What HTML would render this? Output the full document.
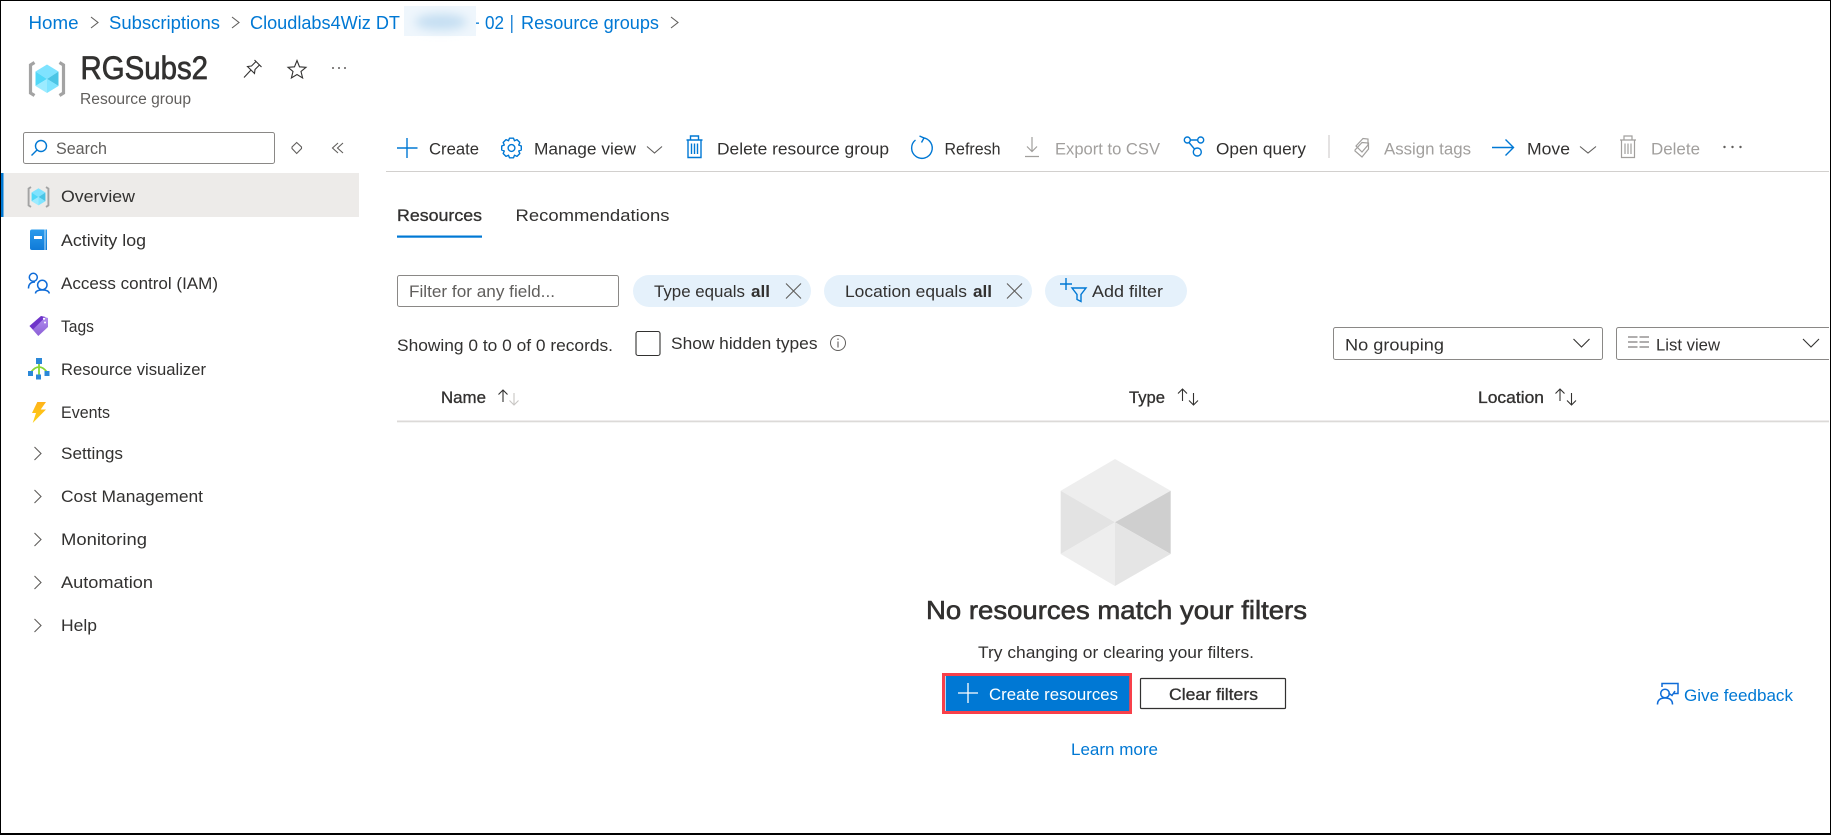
<!DOCTYPE html>
<html lang="en"><head><meta charset="utf-8"><title>RGSubs2</title>
<style>
html,body{margin:0;padding:0;background:#fff;width:1831px;height:835px;overflow:hidden}
svg{display:block}
text{font-family:"Liberation Sans",sans-serif;font-size:17px;fill:#323130}
.l{fill:#0078d4}
.g{fill:#605e5c}
.d{fill:#a19f9d}
.s{stroke:#323130;stroke-width:.32px}
.i{fill:none;stroke:#0078d4;stroke-width:1.4}
.k{fill:none;stroke:#605e5c;stroke-width:1.1}
.q{fill:none;stroke:#a19f9d;stroke-width:1.2}
.a{fill:none;stroke:#323130;stroke-width:1.1}
</style></head><body>
<svg width="1831" height="835" viewBox="0 0 1831 835" xmlns="http://www.w3.org/2000/svg">
<defs>
<filter id="b" x="-40%" y="-80%" width="180%" height="260%"><feGaussianBlur stdDeviation="5"/></filter>
<linearGradient id="bk" x1="0" y1="0" x2="0" y2="1"><stop offset="0" stop-color="#2a9bec"/><stop offset="1" stop-color="#0f7ad8"/></linearGradient>
<linearGradient id="tg" x1="0" y1="0" x2="0" y2="1"><stop offset="0" stop-color="#b28ff0"/><stop offset="1" stop-color="#8c5fd6"/></linearGradient>
<linearGradient id="bt" x1="0" y1="0" x2="0" y2="1"><stop offset="0" stop-color="#ffb21a"/><stop offset="1" stop-color="#fcd116"/></linearGradient>
<g id="rg">
<path d="M-12.500-16.500L-16.500-14V14L-12.500 16.500" fill="none" stroke="#a3a3a3" stroke-width="3.200"/>
<path d="M12.500-16.500L16.500-14V14L12.500 16.500" fill="none" stroke="#a3a3a3" stroke-width="3.200"/>
<path d="M0-14.500L11.500-7.500L0 0L-11.500-7.500Z" fill="#7fe3ff"/>
<path d="M-11.500-7.500L0 0L-11.500 7L-11.500-7.500Z" fill="#50d8f8"/>
<path d="M11.500-7.500L0 0L11.500 7Z" fill="#4bc5e5"/>
<path d="M0 0L-11.500 7L0 14Z" fill="#9cebff"/>
<path d="M0 0L11.500 7L0 14Z" fill="#7fe4ff"/>
</g>
<g id="tr">
<path d="M-8-7H8M-4-7V-11H4V-7M-6.500-7V10.500H6.500V-7M-3-3.500V7M0-3.500V7M3-3.500V7"/>
</g>
</defs>
<rect width="1831" height="835" fill="#fff"/>

<!-- breadcrumb -->
<text x="28.500" y="29" class="l" style="font-size:18px" textLength="50" lengthAdjust="spacingAndGlyphs">Home</text>
<polyline points="91,17 98,22.500 91,28" class="k"/>
<text x="109" y="29" class="l" style="font-size:18px" textLength="111" lengthAdjust="spacingAndGlyphs">Subscriptions</text>
<polyline points="232,17 239,22.500 232,28" class="k"/>
<text x="250" y="29" class="l" style="font-size:18px" textLength="150" lengthAdjust="spacingAndGlyphs">Cloudlabs4Wiz DT</text>
<rect x="404" y="6" width="72" height="30" fill="#eff6fc"/>
<ellipse cx="441" cy="22" rx="26" ry="8" fill="#c4def2" filter="url(#b)"/>
<rect x="476" y="22.500" width="3" height="1.300" fill="#0078d4"/>
<text x="485" y="29" class="l" style="font-size:18px" textLength="19" lengthAdjust="spacingAndGlyphs">02</text>
<rect x="511" y="15" width="1.500" height="18" fill="#2b8bd9"/>
<text x="521" y="29" class="l" style="font-size:18px" textLength="138" lengthAdjust="spacingAndGlyphs">Resource groups</text>
<polyline points="671,17 678,22.500 671,28" class="k"/>

<!-- title -->
<use href="#rg" transform="translate(47,79)"/>
<text x="80.500" y="79" style="font-size:32px;stroke:#323130;stroke-width:.7px" textLength="127.500" lengthAdjust="spacingAndGlyphs">RGSubs2</text>
<text x="80" y="104" class="g" style="font-size:15.500px" textLength="111" lengthAdjust="spacingAndGlyphs">Resource group</text>
<path d="M254.500 60L261.500 67M256 61.500L251.500 66L247.500 66.500L254.500 73.500L255 69.500L259.500 65M251 70L244 77.500" class="a" stroke-width="1.200"/>
<path d="M297 60.500L299.500 66.800L306 67.300L301 71.500L302.600 78L297 74.500L291.400 78L293 71.500L288 67.300L294.500 66.800Z" class="a"/>
<g fill="#605e5c"><circle cx="333" cy="68" r="1"/><circle cx="339" cy="68" r="1"/><circle cx="345" cy="68" r="1"/></g>

<!-- search -->
<rect x="23.500" y="132.500" width="251" height="31" rx="2" fill="#fff" stroke="#8a8886"/>
<circle cx="41" cy="146" r="5.500" class="i" stroke-width="1.200"/>
<line x1="37" y1="150" x2="31.500" y2="155.500" class="i" stroke-width="1.300"/>
<text x="56" y="154" class="g" textLength="51" lengthAdjust="spacingAndGlyphs">Search</text>
<polygon points="296.700,142.500 301.500,147 301.500,148.500 296.700,153.500 292,148.500 292,147" class="k"/>
<polyline points="338,143 332.500,148 338,153" class="k"/>
<polyline points="343,143 337.500,148 343,153" class="k"/>

<!-- nav -->
<rect x="1" y="173" width="358" height="44" fill="#edebe9"/>
<rect x="1" y="173" width="2.500" height="44" fill="#0078d4"/>
<use href="#rg" transform="translate(38.500,197) scale(.6)"/>
<text x="61" y="202" textLength="74" lengthAdjust="spacingAndGlyphs">Overview</text>

<path d="M32 229.500H47V250H32Q30 250 30 248V231.500Q30 229.500 32 229.500Z" fill="url(#bk)"/>
<path d="M45 229.500V250" stroke="#bfe0fa" stroke-width="1"/>
<rect x="34" y="236" width="8" height="3" fill="#fff"/>
<text x="61" y="246" textLength="85" lengthAdjust="spacingAndGlyphs">Activity log</text>

<g fill="none" stroke="#0f6cd8" stroke-width="1.500">
<circle cx="33.300" cy="277.300" r="4"/><path d="M28.500 288.500C28.500 284 31 282 35 282"/>
<circle cx="42.300" cy="285" r="4.700"/><path d="M35.500 293.500C35.500 291 38.500 290 42.300 290S49 291 49.300 293.500"/>
</g>
<text x="61" y="289" textLength="157" lengthAdjust="spacingAndGlyphs">Access control (IAM)</text>

<path d="M29.500 326L41 316L48 318V327L38.300 336Z" fill="url(#tg)"/>
<path d="M29.500 326L41 316L45.500 317L33 329.500Z" fill="#6f35c9"/>
<circle cx="44" cy="318.700" r="1.100" fill="#fff"/><circle cx="45" cy="322.500" r="1" fill="#fff"/>
<text x="61" y="332" textLength="33" lengthAdjust="spacingAndGlyphs">Tags</text>

<path d="M39 364V375M31 372Q35 367 39 367T47 372" fill="none" stroke="#86d633" stroke-width="1.800"/>
<rect x="36" y="358" width="6" height="6" fill="#2b88d8"/>
<rect x="28" y="371" width="5" height="5" fill="#2b88d8"/>
<rect x="36" y="374.500" width="5" height="5" fill="#2b88d8"/>
<rect x="44.500" y="371" width="5" height="5" fill="#2b88d8"/>
<text x="61" y="375" textLength="145" lengthAdjust="spacingAndGlyphs">Resource visualizer</text>

<path d="M37.300 402H46L40.700 409.500H46L32.700 423L36 413H32Z" fill="url(#bt)"/>
<text x="61" y="418" textLength="49" lengthAdjust="spacingAndGlyphs">Events</text>

<polyline points="34.500,447 41,453.500 34.500,460" class="k"/>
<text x="61" y="459" textLength="62" lengthAdjust="spacingAndGlyphs">Settings</text>
<polyline points="34.500,490 41,496.500 34.500,503" class="k"/>
<text x="61" y="502" textLength="142" lengthAdjust="spacingAndGlyphs">Cost Management</text>
<polyline points="34.500,533 41,539.500 34.500,546" class="k"/>
<text x="61" y="545" textLength="86" lengthAdjust="spacingAndGlyphs">Monitoring</text>
<polyline points="34.500,576 41,582.500 34.500,589" class="k"/>
<text x="61" y="588" textLength="92" lengthAdjust="spacingAndGlyphs">Automation</text>
<polyline points="34.500,619 41,625.500 34.500,632" class="k"/>
<text x="61" y="631" textLength="36" lengthAdjust="spacingAndGlyphs">Help</text>

<!-- toolbar -->
<path d="M397 148H417.500M407 138V158" class="i"/>
<text x="429" y="154.500" textLength="50" lengthAdjust="spacingAndGlyphs">Create</text>
<g transform="translate(511.500,148)"><path d="M7.200 3L9.800 2V-2L7.200-3L8.340-5.510L5.510-8.340L3-7.200L2-9.800H-2L-3-7.200L-5.510-8.340L-8.340-5.510L-7.200-3L-9.800-2V2L-7.200 3L-8.340 5.510L-5.510 8.340L-3 7.200L-2 9.800H2L3 7.200L5.510 8.340L8.340 5.510Z" class="i" stroke-width="1.200" stroke-linejoin="round"/><circle r="3.400" class="i" stroke-width="1.200"/></g>
<text x="534" y="154.500" textLength="102" lengthAdjust="spacingAndGlyphs">Manage view</text>
<polyline points="647,146.500 654.500,153 662,146.500" class="k"/>
<use href="#tr" transform="translate(694.500,147)" class="i" stroke-width="1.300"/>
<text x="717" y="154.500" textLength="172" lengthAdjust="spacingAndGlyphs">Delete resource group</text>
<path d="M915.500 140A10.300 10.300 0 1 0 923 137.800" class="i"/>
<path d="M919.500 136L924 138L921.500 142.500" class="i" stroke-width="1.200"/>
<text x="944.500" y="154.500" textLength="56" lengthAdjust="spacingAndGlyphs">Refresh</text>
<path d="M1032 137V151.500M1027 146.500L1032 151.500L1037 146.500M1025 156.500H1039" class="q"/>
<text x="1055" y="154.500" class="d" textLength="105" lengthAdjust="spacingAndGlyphs">Export to CSV</text>
<g class="i" stroke-width="1.500"><circle cx="1187.300" cy="140" r="3"/><circle cx="1200.700" cy="140" r="3"/><circle cx="1197.300" cy="152" r="4"/><path d="M1190.300 140H1197.700M1189 142.500L1194.500 149"/></g>
<text x="1216" y="154.500" textLength="90" lengthAdjust="spacingAndGlyphs">Open query</text>
<rect x="1328.500" y="135" width="1" height="23" fill="#c8c6c4"/>
<g class="q"><path d="M1356 146L1363 138.500L1368 139V145L1362 152Z"/><path d="M1355 150L1362 142.500L1368.500 143V149L1362 157L1355 151Z"/></g>
<text x="1384" y="154.500" class="d" textLength="87" lengthAdjust="spacingAndGlyphs">Assign tags</text>
<path d="M1492 147.500H1513.500M1505.500 139.500L1513.500 147.500L1505.500 155.500" class="i"/>
<text x="1527" y="154.500" textLength="43" lengthAdjust="spacingAndGlyphs">Move</text>
<polyline points="1580,146.500 1588,153 1596,146.500" class="k"/>
<use href="#tr" transform="translate(1628,147)" class="q"/>
<text x="1651" y="154.500" class="d" textLength="49" lengthAdjust="spacingAndGlyphs">Delete</text>
<g fill="#605e5c"><circle cx="1724.500" cy="147" r="1.200"/><circle cx="1732.500" cy="147" r="1.200"/><circle cx="1740.500" cy="147" r="1.200"/></g>
<rect x="386" y="171" width="1443" height="1" fill="#d2d0ce"/>

<!-- tabs -->
<text x="397" y="221" class="s" textLength="85" lengthAdjust="spacingAndGlyphs">Resources</text>
<text x="515.500" y="221" textLength="154" lengthAdjust="spacingAndGlyphs">Recommendations</text>
<rect x="397" y="235.500" width="85" height="2.200" fill="#0078d4"/>

<!-- filters -->
<rect x="397.500" y="275.500" width="221" height="31" rx="2" fill="#fff" stroke="#8a8886"/>
<text x="409" y="297" class="g" textLength="146" lengthAdjust="spacingAndGlyphs">Filter for any field...</text>
<rect x="633" y="275" width="178" height="32" rx="16" fill="#e5f1fb"/>
<text x="654" y="297" textLength="91" lengthAdjust="spacingAndGlyphs">Type equals</text>
<text x="751" y="297" style="font-weight:700" textLength="19" lengthAdjust="spacingAndGlyphs">all</text>
<path d="M786 283.500L801 298.500M801 283.500L786 298.500" class="k"/>
<rect x="824" y="275" width="208" height="32" rx="16" fill="#e5f1fb"/>
<text x="845" y="297" textLength="122" lengthAdjust="spacingAndGlyphs">Location equals</text>
<text x="973" y="297" style="font-weight:700" textLength="19" lengthAdjust="spacingAndGlyphs">all</text>
<path d="M1007 283.500L1022 298.500M1022 283.500L1007 298.500" class="k"/>
<rect x="1045" y="275" width="142" height="32" rx="16" fill="#e5f1fb"/>
<path d="M1060 284H1072M1066 278V290" class="i" stroke-width="1.300"/>
<path d="M1072 288H1086L1081 294.500V301.500L1077 299.500V294.500Z" class="i" stroke-width="1.200"/>
<text x="1092" y="297" textLength="71" lengthAdjust="spacingAndGlyphs">Add filter</text>

<text x="397" y="351" textLength="216" lengthAdjust="spacingAndGlyphs">Showing 0 to 0 of 0 records.</text>
<rect x="636" y="331.500" width="24" height="24" rx="2" fill="#fff" stroke="#323130" stroke-width="1.100"/>
<text x="671" y="349" textLength="146.500" lengthAdjust="spacingAndGlyphs">Show hidden types</text>
<circle cx="838" cy="343" r="7.500" fill="none" stroke="#605e5c" stroke-width="1"/>
<path d="M838 341.500V347.500M838 338.500V340" stroke="#605e5c" stroke-width="1.100"/>

<rect x="1333.500" y="327.500" width="269" height="32" rx="2" fill="#fff" stroke="#8a8886"/>
<text x="1345" y="350.500" textLength="99" lengthAdjust="spacingAndGlyphs">No grouping</text>
<polyline points="1573.500,339 1581.500,347 1589.500,339" class="a"/>
<rect x="1616.500" y="327.500" width="230" height="32" rx="2" fill="#fff" stroke="#8a8886"/>
<path d="M1628 337H1637.500M1628 342H1637.500M1628 347H1637.500M1639.500 337H1649M1639.500 342H1649M1639.500 347H1649" class="k"/>
<text x="1656" y="350.500" textLength="64" lengthAdjust="spacingAndGlyphs">List view</text>
<polyline points="1803,339 1811,347 1819,339" class="a"/>

<!-- table header -->
<text x="441" y="403" class="s" textLength="45" lengthAdjust="spacingAndGlyphs">Name</text>
<path d="M503 402V390M498.500 394.500L503 390L507.500 394.500" class="a"/>
<path d="M514 393V405M509.500 400.500L514 405L518.500 400.500" fill="none" stroke="#c8c6c4" stroke-width="1.100"/>
<text x="1129" y="403" class="s" textLength="36" lengthAdjust="spacingAndGlyphs">Type</text>
<path d="M1182.500 401V389M1178 393.500L1182.500 389L1187 393.500M1193.500 393V405M1189 400.500L1193.500 405L1198 400.500" class="a"/>
<text x="1478" y="403" class="s" textLength="66" lengthAdjust="spacingAndGlyphs">Location</text>
<path d="M1560 401V389M1555.500 393.500L1560 389L1564.500 393.500M1571.500 393V405M1567 400.500L1571.500 405L1576 400.500" class="a"/>
<rect x="397" y="420.500" width="1432" height="1.800" fill="#dcdad8"/>

<!-- empty state -->
<path d="M1115 459L1170.700 490.700L1115 522.300L1060.700 490.700Z" fill="#eeeeee"/>
<path d="M1060.700 490.700L1115 522.300L1060.700 554Z" fill="#e3e3e3"/>
<path d="M1170.700 490.700L1115 522.300L1170.700 554Z" fill="#cfcfcf"/>
<path d="M1060.700 554L1115 522.300V586Z" fill="#eeeeee"/>
<path d="M1170.700 554L1115 522.300V586Z" fill="#e5e5e5"/>
<text x="926" y="619" style="font-size:26px;stroke:#323130;stroke-width:.6px" textLength="381" lengthAdjust="spacingAndGlyphs">No resources match your filters</text>
<text x="978" y="658" textLength="276" lengthAdjust="spacingAndGlyphs">Try changing or clearing your filters.</text>

<rect x="943.500" y="674.500" width="187" height="38" fill="#fff" stroke="#f8404a" stroke-width="3"/>
<rect x="945.700" y="676" width="183.500" height="35" fill="#0078d4"/>
<path d="M958 693H978M968 683V703" fill="none" stroke="#fff" stroke-width="1.300"/>
<text x="989" y="700" style="fill:#fff" textLength="129" lengthAdjust="spacingAndGlyphs">Create resources</text>
<rect x="1140.500" y="678.500" width="145" height="30" rx="1" fill="#fff" stroke="#323130" stroke-width="1.200"/>
<text x="1169" y="700" class="s" textLength="89" lengthAdjust="spacingAndGlyphs">Clear filters</text>
<text x="1071" y="755" class="l" textLength="87" lengthAdjust="spacingAndGlyphs">Learn more</text>

<g fill="none" stroke="#0f6cd8" stroke-width="1.500">
<circle cx="1665" cy="693.500" r="4.300"/>
<path d="M1657.500 704.500C1657.500 700 1660.500 698 1665 698S1672.500 700 1672.500 704.500"/>
<path d="M1662 687V683.500H1678V693.500H1673M1668.500 693L1672 695.500L1675 691"/>
</g>
<text x="1684" y="701" class="l" textLength="109" lengthAdjust="spacingAndGlyphs">Give feedback</text>

<!-- frame -->
<rect x="1829" y="0" width="2" height="835" fill="#fff"/>
<rect x="0" y="0" width="1831" height="1" fill="#000"/>
<rect x="0" y="0" width="1" height="835" fill="#000"/>
<rect x="1830" y="0" width="1" height="835" fill="#000"/>
<rect x="0" y="833" width="1831" height="2" fill="#000"/>
</svg>
</body></html>
